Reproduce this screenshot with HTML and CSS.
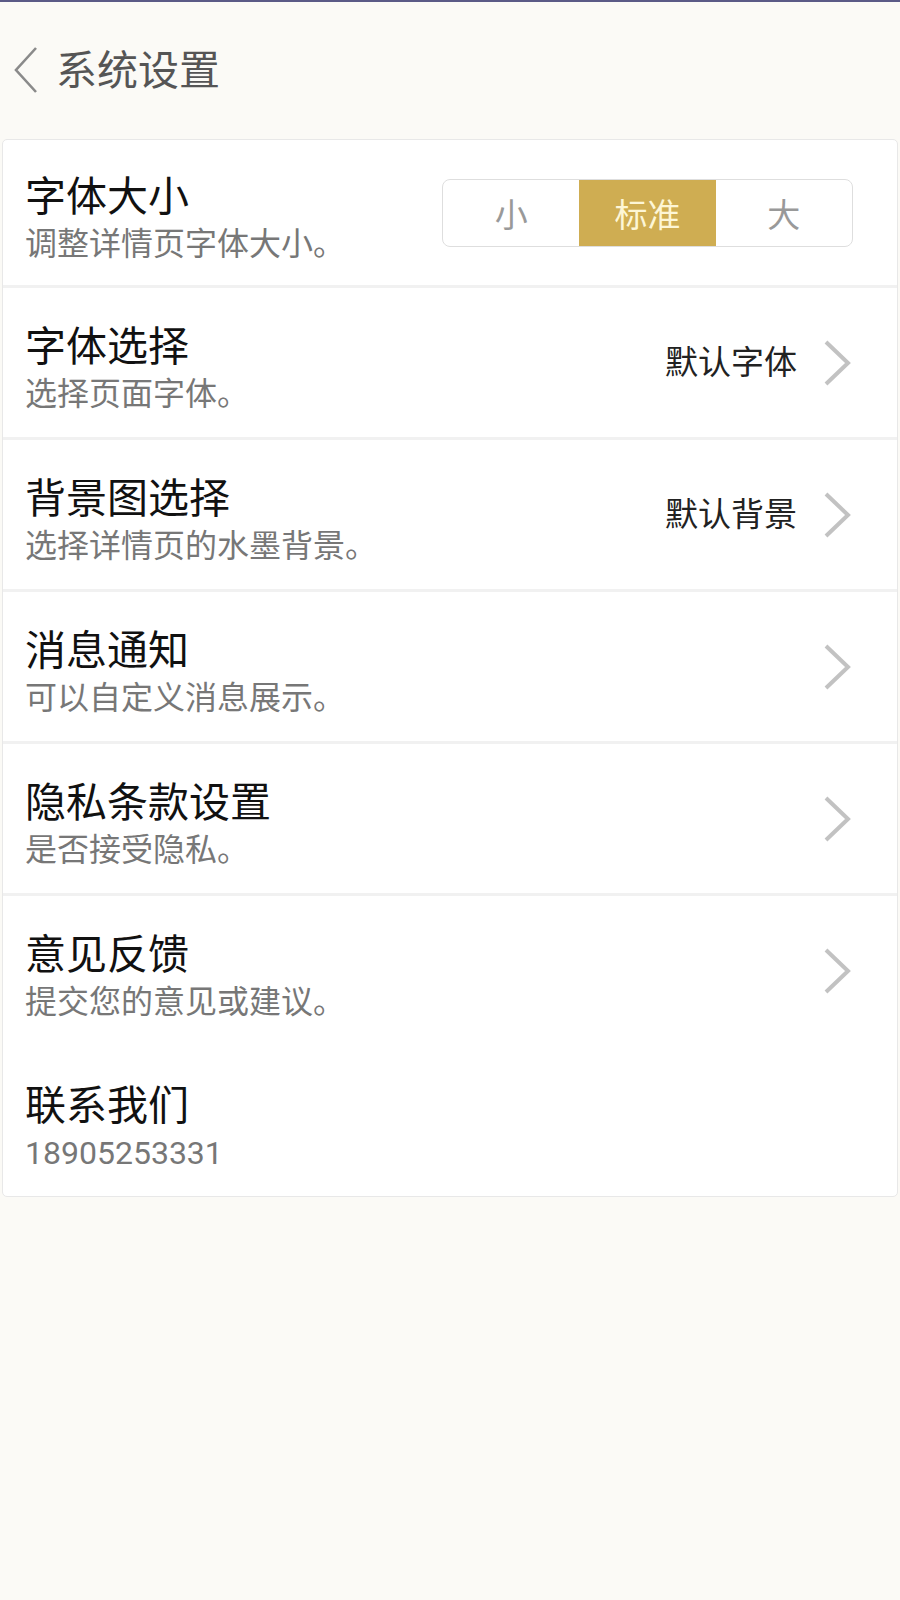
FILE: index.html
```html
<!DOCTYPE html>
<html lang="zh-CN">
<head>
<meta charset="utf-8">
<title>系统设置</title>
<link rel="stylesheet" href="styles.css">
</head>
<body>
<div class="topline"></div>
<header class="header">
  <svg class="back" width="26" height="48" viewBox="0 0 26 48"><polyline points="23,2 3,24 23,46" fill="none" stroke="#8a8a8a" stroke-width="2.6"/></svg>
  <h1 class="page-title">系统设置</h1>
</header>
<main class="card">
  <div class="row row-first">
    <div class="text">
      <div class="title">字体大小</div>
      <div class="sub">调整详情页字体大小。</div>
    </div>
    <div class="seg">
      <div class="seg-item">小</div>
      <div class="seg-item active">标准</div>
      <div class="seg-item">大</div>
    </div>
  </div>
  <div class="row">
    <div class="text">
      <div class="title">字体选择</div>
      <div class="sub">选择页面字体。</div>
    </div>
    <div class="value">默认字体</div>
    <svg class="chev" width="28" height="48" viewBox="0 0 28 48"><polyline points="3,3 25,24 3,45" fill="none" stroke="#c2c2c2" stroke-width="4"/></svg>
  </div>
  <div class="row">
    <div class="text">
      <div class="title">背景图选择</div>
      <div class="sub">选择详情页的水墨背景。</div>
    </div>
    <div class="value">默认背景</div>
    <svg class="chev" width="28" height="48" viewBox="0 0 28 48"><polyline points="3,3 25,24 3,45" fill="none" stroke="#c2c2c2" stroke-width="4"/></svg>
  </div>
  <div class="row">
    <div class="text">
      <div class="title">消息通知</div>
      <div class="sub">可以自定义消息展示。</div>
    </div>
    <svg class="chev" width="28" height="48" viewBox="0 0 28 48"><polyline points="3,3 25,24 3,45" fill="none" stroke="#c2c2c2" stroke-width="4"/></svg>
  </div>
  <div class="row">
    <div class="text">
      <div class="title">隐私条款设置</div>
      <div class="sub">是否接受隐私。</div>
    </div>
    <svg class="chev" width="28" height="48" viewBox="0 0 28 48"><polyline points="3,3 25,24 3,45" fill="none" stroke="#c2c2c2" stroke-width="4"/></svg>
  </div>
  <div class="row row-noline">
    <div class="text">
      <div class="title">意见反馈</div>
      <div class="sub">提交您的意见或建议。</div>
    </div>
    <svg class="chev" width="28" height="48" viewBox="0 0 28 48"><polyline points="3,3 25,24 3,45" fill="none" stroke="#c2c2c2" stroke-width="4"/></svg>
  </div>
  <div class="row row-last">
    <div class="text">
      <div class="title">联系我们</div>
      <div class="sub">18905253331</div>
    </div>
  </div>
</main>
</body>
</html>
```
FILE: styles.css
```css
html, body {
  margin: 0;
  padding: 0;
}
body {
  width: 900px;
  min-height: 1600px;
  background: #fbfaf6;
  font-family: Roboto, "Noto Sans CJK SC", sans-serif;
}
.topline {
  height: 2px;
  background: #5b5a86;
}
.header {
  height: 137px;
  display: flex;
  align-items: center;
  padding-left: 13px;
  box-sizing: border-box;
}
.back {
  display: block;
  margin-right: 17px;
  margin-top: -2px;
}
.page-title {
  margin: 0;
  font-weight: 400;
  font-size: 41px;
  line-height: 48px;
  color: #555;
}
.card {
  margin: 0 2px;
  background: #fff;
  border: 1px solid #e8e8e8;
  border-radius: 5px;
  overflow: hidden;
}
.row {
  display: flex;
  align-items: center;
  height: 149px;
  box-sizing: content-box;
  padding: 0 46px 0 22px;
  border-bottom: 3px solid #f1f1f1;
}
.row-first {
  height: 145px;
}
.row-noline {
  border-bottom-color: #fff;
}
.row-last {
  border-bottom: 0;
  height: 148px;
}
.text {
  flex: 1;
  padding-top: 10px;
}
.title {
  font-size: 41px;
  line-height: 48px;
  color: #111;
}
.sub {
  font-size: 32px;
  line-height: 38px;
  color: #777;
  margin-top: 4px;
}
.value {
  font-size: 33px;
  line-height: 40px;
  color: #222;
  margin-right: 26px;
}
.chev {
  display: block;
}
.seg {
  display: flex;
  width: 411px;
  height: 68px;
  border: 1px solid #dedede;
  border-radius: 8px;
  overflow: hidden;
  box-sizing: border-box;
  margin-right: -2px;
}
.seg-item {
  flex: 1;
  display: flex;
  align-items: center;
  justify-content: center;
  font-size: 33px;
  color: #999;
}
.seg-item.active {
  background: #cfad52;
  color: #fdf6d6;
}
```
